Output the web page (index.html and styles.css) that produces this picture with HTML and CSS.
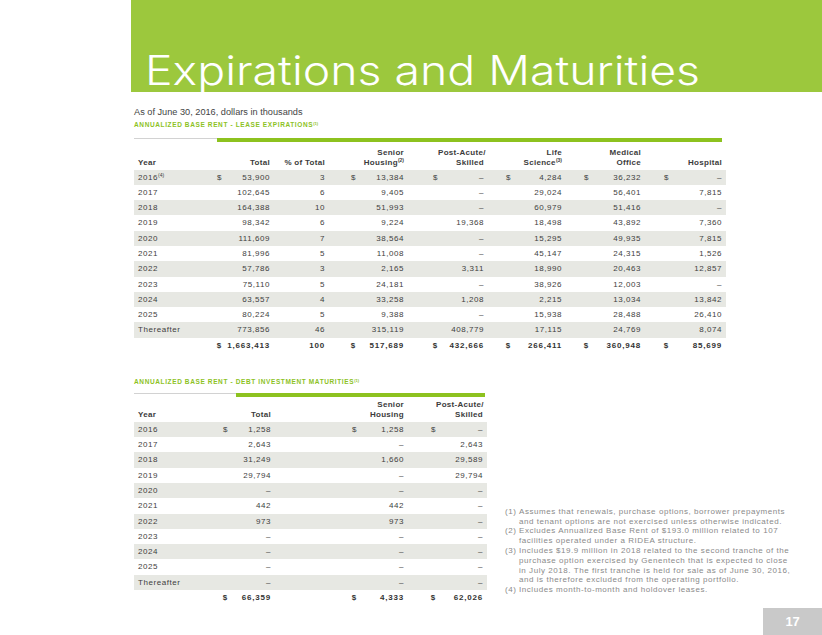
FILE: index.html
```html
<!DOCTYPE html>
<html lang="en">
<head>
<meta charset="utf-8">
<title>Expirations and Maturities</title>
<link rel="stylesheet" href="styles.css">
</head>
<body>
<div class="page">
  <header class="banner">
    <h1 class="title">Expirations and Maturities</h1>
  </header>
  <main class="content">
    <p class="subtitle">As of June 30, 2016, dollars in thousands</p>
    <h2 class="section-label">ANNUALIZED BASE RENT - LEASE EXPIRATIONS<sup>(1)</sup></h2>
    <div class="rule rule-lease"><span class="rule-grey"></span><span class="rule-green"></span></div>
    <table class="data lease">
      <colgroup>
        <col class="c-year"><col class="c-d1"><col class="c-total"><col class="c-pct"><col class="c-d2"><col class="c-sh"><col class="c-d3"><col class="c-pa"><col class="c-d4"><col class="c-ls"><col class="c-d5"><col class="c-mo"><col class="c-d6"><col class="c-h">
      </colgroup>
      <thead>
        <tr>
          <th class="yr">Year</th><th></th><th>Total</th><th>% of Total</th><th></th><th>Senior<br>Housing<sup>(2)</sup></th><th></th><th>Post-Acute/<br>Skilled</th><th></th><th>Life<br>Science<sup>(3)</sup></th><th></th><th>Medical<br>Office</th><th></th><th class="last">Hospital</th>
        </tr>
      </thead>
      <tbody>
        <tr class="alt"><td class="yr">2016<sup>(4)</sup></td><td>$</td><td>53,900</td><td>3</td><td>$</td><td>13,384</td><td>$</td><td>–</td><td>$</td><td>4,284</td><td>$</td><td>36,232</td><td>$</td><td class="last">–</td></tr>
        <tr><td class="yr">2017</td><td></td><td>102,645</td><td>6</td><td></td><td>9,405</td><td></td><td>–</td><td></td><td>29,024</td><td></td><td>56,401</td><td></td><td class="last">7,815</td></tr>
        <tr class="alt"><td class="yr">2018</td><td></td><td>164,388</td><td>10</td><td></td><td>51,993</td><td></td><td>–</td><td></td><td>60,979</td><td></td><td>51,416</td><td></td><td class="last">–</td></tr>
        <tr><td class="yr">2019</td><td></td><td>98,342</td><td>6</td><td></td><td>9,224</td><td></td><td>19,368</td><td></td><td>18,498</td><td></td><td>43,892</td><td></td><td class="last">7,360</td></tr>
        <tr class="alt"><td class="yr">2020</td><td></td><td>111,609</td><td>7</td><td></td><td>38,564</td><td></td><td>–</td><td></td><td>15,295</td><td></td><td>49,935</td><td></td><td class="last">7,815</td></tr>
        <tr><td class="yr">2021</td><td></td><td>81,996</td><td>5</td><td></td><td>11,008</td><td></td><td>–</td><td></td><td>45,147</td><td></td><td>24,315</td><td></td><td class="last">1,526</td></tr>
        <tr class="alt"><td class="yr">2022</td><td></td><td>57,786</td><td>3</td><td></td><td>2,165</td><td></td><td>3,311</td><td></td><td>18,990</td><td></td><td>20,463</td><td></td><td class="last">12,857</td></tr>
        <tr><td class="yr">2023</td><td></td><td>75,110</td><td>5</td><td></td><td>24,181</td><td></td><td>–</td><td></td><td>38,926</td><td></td><td>12,003</td><td></td><td class="last">–</td></tr>
        <tr class="alt"><td class="yr">2024</td><td></td><td>63,557</td><td>4</td><td></td><td>33,258</td><td></td><td>1,208</td><td></td><td>2,215</td><td></td><td>13,034</td><td></td><td class="last">13,842</td></tr>
        <tr><td class="yr">2025</td><td></td><td>80,224</td><td>5</td><td></td><td>9,388</td><td></td><td>–</td><td></td><td>15,938</td><td></td><td>28,488</td><td></td><td class="last">26,410</td></tr>
        <tr class="alt"><td class="yr">Thereafter</td><td></td><td>773,856</td><td>46</td><td></td><td>315,119</td><td></td><td>408,779</td><td></td><td>17,115</td><td></td><td>24,769</td><td></td><td class="last">8,074</td></tr>
      </tbody>
      <tfoot>
        <tr><td class="yr"></td><td>$</td><td>1,663,413</td><td>100</td><td>$</td><td>517,689</td><td>$</td><td>432,666</td><td>$</td><td>266,411</td><td>$</td><td>360,948</td><td>$</td><td class="last">85,699</td></tr>
      </tfoot>
    </table>

    <section class="bottom">
      <div class="debt">
        <h2 class="section-label">ANNUALIZED BASE RENT - DEBT INVESTMENT MATURITIES<sup>(1)</sup></h2>
        <div class="rule rule-debt"><span class="rule-grey"></span><span class="rule-green"></span></div>
        <table class="data debt-table">
          <colgroup>
            <col class="k-year"><col class="k-d1"><col class="k-total"><col class="k-d2"><col class="k-sh"><col class="k-d3"><col class="k-pa">
          </colgroup>
          <thead>
            <tr><th class="yr">Year</th><th></th><th>Total</th><th></th><th>Senior<br>Housing</th><th></th><th class="last">Post-Acute/<br>Skilled</th></tr>
          </thead>
          <tbody>
            <tr class="alt"><td class="yr">2016</td><td>$</td><td>1,258</td><td>$</td><td>1,258</td><td>$</td><td class="last">–</td></tr>
            <tr><td class="yr">2017</td><td></td><td>2,643</td><td></td><td>–</td><td></td><td class="last">2,643</td></tr>
            <tr class="alt"><td class="yr">2018</td><td></td><td>31,249</td><td></td><td>1,660</td><td></td><td class="last">29,589</td></tr>
            <tr><td class="yr">2019</td><td></td><td>29,794</td><td></td><td>–</td><td></td><td class="last">29,794</td></tr>
            <tr class="alt"><td class="yr">2020</td><td></td><td>–</td><td></td><td>–</td><td></td><td class="last">–</td></tr>
            <tr><td class="yr">2021</td><td></td><td>442</td><td></td><td>442</td><td></td><td class="last">–</td></tr>
            <tr class="alt"><td class="yr">2022</td><td></td><td>973</td><td></td><td>973</td><td></td><td class="last">–</td></tr>
            <tr><td class="yr">2023</td><td></td><td>–</td><td></td><td>–</td><td></td><td class="last">–</td></tr>
            <tr class="alt"><td class="yr">2024</td><td></td><td>–</td><td></td><td>–</td><td></td><td class="last">–</td></tr>
            <tr><td class="yr">2025</td><td></td><td>–</td><td></td><td>–</td><td></td><td class="last">–</td></tr>
            <tr class="alt"><td class="yr">Thereafter</td><td></td><td>–</td><td></td><td>–</td><td></td><td class="last">–</td></tr>
          </tbody>
          <tfoot>
            <tr><td class="yr"></td><td>$</td><td>66,359</td><td>$</td><td>4,333</td><td>$</td><td class="last">62,026</td></tr>
          </tfoot>
        </table>
      </div>

      <ol class="notes">
        <li><span class="n">(1)</span><span class="t">Assumes that renewals, purchase options, borrower prepayments<br>and tenant options are not exercised unless otherwise indicated.</span></li>
        <li><span class="n">(2)</span><span class="t">Excludes Annualized Base Rent of $193.0 million related to 107<br>facilities operated under a RIDEA structure.</span></li>
        <li><span class="n">(3)</span><span class="t">Includes $19.9 million in 2018 related to the second tranche of the<br>purchase option exercised by Genentech that is expected to close<br>in July 2018. The first tranche is held for sale as of June 30, 2016,<br>and is therefore excluded from the operating portfolio.</span></li>
        <li><span class="n">(4)</span><span class="t">Includes month-to-month and holdover leases.</span></li>
      </ol>
    </section>
  </main>
  <div class="page-num">17</div>
</div>
</body>
</html>
```

FILE: styles.css
```css
* { box-sizing: border-box; }

html, body {
  margin: 0;
  padding: 0;
  background: #ffffff;
}

.page {
  position: relative;
  width: 822px;
  height: 635px;
  overflow: hidden;
  font-family: "Liberation Sans", Arial, sans-serif;
  color: #4a4a4a;
}

/* Banner */
.banner {
  margin-left: 131px;
  height: 92px;
  background: #9cc83d;
  padding-top: 51px;
  padding-left: 14px;
}

.title {
  margin: 0;
  font-family: "Inter", "Roboto", sans-serif;
  font-weight: 300;
  font-size: 40.5px;
  line-height: 40px;
  letter-spacing: 0;
  color: #ffffff;
  white-space: nowrap;
  transform: scaleX(1.145);
  transform-origin: left center;
}

/* Content */
.content {
  padding-left: 134px;
}

.subtitle {
  margin: 14px 0 0 0;
  font-size: 9.2px;
  line-height: 12px;
  color: #444444;
}

.section-label {
  margin: 2px 0 0 0;
  font-size: 6.5px;
  line-height: 10px;
  font-weight: 700;
  letter-spacing: 0.62px;
  color: #8dc21f;
  white-space: nowrap;
}

.section-label sup {
  font-size: 4px;
  vertical-align: 2px;
  line-height: 0;
  letter-spacing: 0;
}

.rule {
  display: flex;
  height: 4px;
  margin-top: 8px;
}

.rule-grey {
  border-top: 1px solid #d2d2d2;
}

.rule-green {
  background: #8dc21f;
}

.rule-lease .rule-grey { width: 83px; }
.rule-lease .rule-green { width: 505px; }

.rule-debt { margin-top: 6px; }
.rule-debt .rule-grey { width: 102px; }
.rule-debt .rule-green { width: 249px; }

/* Tables */
.data {
  border-collapse: collapse;
  border-spacing: 0;
  table-layout: fixed;
  font-size: 8px;
  letter-spacing: 0.55px;
  color: #3e3e3e;
}

.data th,
.data td {
  padding: 0;
  text-align: right;
  white-space: nowrap;
  overflow: visible;
}

.data th {
  vertical-align: bottom;
  font-weight: 700;
  line-height: 10px;
  color: #3c3c3c;
  letter-spacing: 0.3px;
  padding-bottom: 2px;
}

.data thead tr { height: 27.5px; }

.data tbody tr { height: 15.3px; }

.data td {
  line-height: 15.3px;
  vertical-align: middle;
}

.data .yr {
  text-align: left;
  padding-left: 4px;
}

.data .last {
  padding-right: 4px;
}

.data tr.alt td {
  background: #e7e8e3;
}

.data tfoot tr { height: 16px; }

.data tfoot td {
  font-weight: 700;
  letter-spacing: 0.8px;
  color: #333333;
}

.data sup {
  font-size: 5px;
  line-height: 0;
  vertical-align: 3px;
  letter-spacing: 0;
}

.lease { width: 592px; }
.c-year { width: 76px; }
.c-d1 { width: 12px; }
.c-total { width: 48px; }
.c-pct { width: 55px; }
.c-d2 { width: 31px; }
.c-sh { width: 48px; }
.c-d3 { width: 34px; }
.c-pa { width: 46px; }
.c-d4 { width: 27px; }
.c-ls { width: 51px; }
.c-d5 { width: 27px; }
.c-mo { width: 52px; }
.c-d6 { width: 28px; }
.c-h { width: 57px; }

/* Bottom section */
.bottom {
  display: flex;
  align-items: flex-start;
  margin-top: 21px;
}

.debt-table { width: 353px; }
.debt-table thead tr { height: 25px; }
.k-year { width: 82px; }
.k-d1 { width: 12px; }
.k-total { width: 43px; }
.k-d2 { width: 86px; }
.k-sh { width: 47px; }
.k-d3 { width: 32px; }
.k-pa { width: 51px; }

.notes {
  list-style: none;
  margin: 132px 0 0 18px;
  padding: 0;
  font-size: 8px;
  line-height: 9.8px;
  letter-spacing: 0.55px;
  color: #8a8a8a;
}

.notes li {
  display: flex;
  white-space: nowrap;
}

.notes .n {
  width: 11px;
  margin-right: 3px;
  text-align: right;
  flex-shrink: 0;
}

/* Page number */
.page-num {
  position: absolute;
  right: 0;
  bottom: 0;
  width: 59px;
  height: 27px;
  background: #c9c9c9;
  color: #ffffff;
  font-weight: 700;
  font-size: 13px;
  line-height: 27px;
  text-align: center;
  letter-spacing: -0.3px;
}
```
